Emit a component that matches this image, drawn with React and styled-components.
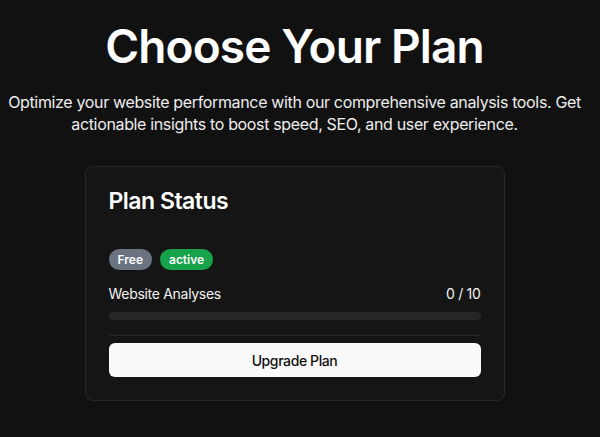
import styled, { createGlobalStyle } from 'styled-components';

const GlobalStyle = createGlobalStyle`
  html, body {
    margin: 0;
    padding: 0;
    background: #111111;
  }
  body {
    font-family: Inter, "Liberation Sans", sans-serif;
    color: #fafafa;
    -webkit-font-smoothing: antialiased;
  }
`;

const Page = styled.main`
  box-sizing: border-box;
  width: 589px;
  min-height: 437px;
  display: flex;
  flex-direction: column;
  align-items: center;
`;

const Title = styled.h1`
  margin: 22px 0 0;
  font-size: 46px;
  line-height: 48px;
  font-weight: 600;
  letter-spacing: -0.9px;
  color: #ffffff;
`;

const Subtitle = styled.p`
  margin: 21px 0 0;
  width: 589px;
  font-size: 16px;
  line-height: 22px;
  letter-spacing: -0.35px;
  text-align: center;
  color: #ededed;
`;

const Card = styled.section`
  box-sizing: border-box;
  width: 420px;
  margin-top: 31px;
  padding: 22px 23px 23px;
  background: #151515;
  border: 1px solid #282828;
  border-radius: 8px;
  display: flex;
  flex-direction: column;
`;

const CardTitle = styled.h2`
  margin: 0;
  font-size: 23px;
  line-height: 24px;
  font-weight: 600;
  letter-spacing: -0.5px;
  color: #ffffff;
`;

const BadgeRow = styled.div`
  display: flex;
  gap: 8px;
  margin-top: 36px;
`;

const Badge = styled.span`
  display: inline-flex;
  align-items: center;
  height: 21px;
  padding: 0 9px;
  border-radius: 999px;
  font-size: 12px;
  font-weight: 600;
  color: #ffffff;
  background: ${(p) => p.$bg};
`;

const UsageRow = styled.div`
  display: flex;
  justify-content: space-between;
  margin-top: 14px;
  font-size: 14px;
  line-height: 20px;
  letter-spacing: -0.3px;
  color: #f2f2f2;
`;

const Track = styled.div`
  height: 8px;
  margin-top: 8px;
  border-radius: 999px;
  background: #262626;
  overflow: hidden;
`;

const Fill = styled.div`
  height: 100%;
  background: #fafafa;
`;

const Divider = styled.hr`
  margin: 15px 0 0;
  border: none;
  height: 1px;
  background: #262626;
`;

const UpgradeButton = styled.button`
  margin-top: 7px;
  height: 34px;
  border: none;
  border-radius: 6px;
  background: #fafafa;
  color: #111111;
  font-family: inherit;
  font-size: 14px;
  font-weight: 500;
  letter-spacing: -0.4px;
  cursor: pointer;
`;

export default function App() {
  const used = 0;
  const limit = 10;
  return (
    <>
      <GlobalStyle />
      <Page>
        <Title>Choose Your Plan</Title>
        <Subtitle>
          Optimize your website performance with our comprehensive analysis tools. Get
          <br />
          actionable insights to boost speed, SEO, and user experience.
        </Subtitle>
        <Card>
          <CardTitle>Plan Status</CardTitle>
          <BadgeRow>
            <Badge $bg="#6b7280">Free</Badge>
            <Badge $bg="#16a34a">active</Badge>
          </BadgeRow>
          <UsageRow>
            <span>Website Analyses</span>
            <span>{used} / {limit}</span>
          </UsageRow>
          <Track>
            <Fill style={{ width: `${(used / limit) * 100}%` }} />
          </Track>
          <Divider />
          <UpgradeButton>Upgrade Plan</UpgradeButton>
        </Card>
      </Page>
    </>
  );
}
